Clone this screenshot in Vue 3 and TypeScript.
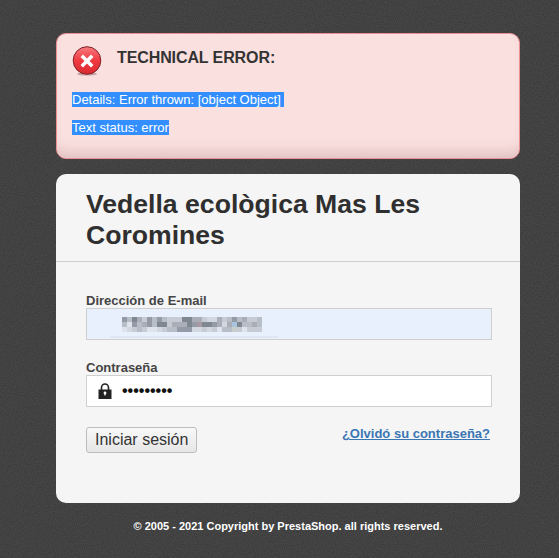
<script setup lang="ts">
const palette = ['#7f8791', '#959ba6', '#a9aeb8', '#b8bec8', '#c6cbd4', '#d3d7e0', '#dfe3ec', '#a89aa4', '#a9c4dc', '#c9cfc8']

// blurred-out e-mail value, one digit per mosaic cell
const rows = [
  '1302413134440022455243132443',
  '3613213004222017001252803323',
  '6543466543311155454633946444',
]
const mosaic = rows.join('').split('').map((digit) => palette[Number(digit)])

const noise =
  "url(\"data:image/svg+xml,%3Csvg xmlns='http://www.w3.org/2000/svg' width='200' height='200'%3E%3Cfilter id='n'%3E%3CfeTurbulence type='fractalNoise' baseFrequency='.9' numOctaves='2'/%3E%3CfeColorMatrix values='0 0 0 0 1 0 0 0 0 1 0 0 0 0 1 .12 0 0 0 0'/%3E%3C/filter%3E%3Crect width='200' height='200' filter='url(%23n)'/%3E%3C/svg%3E\")"
</script>

<template>
  <div class="page" :style="{ backgroundImage: noise }">
    <div class="content">
      <div class="alert">
        <div class="alert-head">
          <svg class="error-icon" width="30" height="30" viewBox="0 0 30 30">
            <defs>
              <linearGradient id="redBall" x1="0" y1="0" x2="0" y2="1">
                <stop offset="0" stop-color="#f77b80" />
                <stop offset="0.5" stop-color="#ef3a40" />
                <stop offset="1" stop-color="#d92a30" />
              </linearGradient>
            </defs>
            <ellipse cx="15" cy="28" rx="10" ry="1.6" fill="#9c7a7a" opacity="0.6" />
            <circle cx="15" cy="14.5" r="13.8" fill="url(#redBall)" stroke="#7d2226" stroke-width="1" />
            <path d="M11 8.500l4 4 4-4 2.500 2.500-4 4 4 4-2.500 2.500-4-4-4 4L8.500 19l4-4-4-4z" fill="#fff" />
          </svg>
          <h3 class="alert-title">TECHNICAL ERROR:</h3>
        </div>
        <p class="alert-line"><span class="selected">Details: Error thrown: [object Object]&nbsp;</span></p>
        <p class="alert-line"><span class="selected">Text status: error</span></p>
      </div>

      <div class="card">
        <h1 class="shop-name">Vedella ecològica Mas Les Coromines</h1>
        <form class="login" @submit.prevent>
          <label class="field-label">Dirección de E-mail</label>
          <div class="field field-email">
            <div class="mosaic">
              <i v-for="(color, index) in mosaic" :key="index" :style="{ background: color }"></i>
            </div>
            <div class="autofill-line"></div>
          </div>

          <label class="field-label second">Contraseña</label>
          <div class="field">
            <svg class="lock" width="14" height="16" viewBox="0 0 14 16">
              <path d="M3.500 7V4.500a3.500 3.500 0 0 1 7 0V7" fill="none" stroke="#222" stroke-width="1.600" />
              <path d="M0.500 6.500h13V16H0.500z" fill="#222" />
              <circle cx="7" cy="10" r="1.400" fill="#fff" />
              <path d="M6.400 10h1.200v2.600H6.400z" fill="#fff" />
            </svg>
            <span class="dots">•••••••••</span>
          </div>

          <div class="actions">
            <button class="submit" type="submit">Iniciar sesión</button>
            <a class="forgot" href="#">¿Olvidó su contraseña?</a>
          </div>
        </form>
      </div>

      <p class="copyright">© 2005 - 2021 Copyright by PrestaShop. all rights reserved.</p>
    </div>
  </div>
</template>

<style>
body {
  background-color: #363636;
}
</style>

<style scoped>
.page {
  height: 558px;
  overflow: hidden;
  font-family: 'Liberation Sans', Arial, sans-serif;
  color: #333;
}

.content {
  width: 464px;
  margin-left: 56px;
  padding-top: 33px;
}

.alert {
  height: 126px;
  box-sizing: border-box;
  padding: 12px 15px;
  background: #fbe0e0;
  border: 1px solid #ec8f93;
  border-radius: 10px;
  box-shadow: inset 0 -14px 14px -8px rgba(120, 70, 70, 0.2);
}

.alert-head {
  display: flex;
  align-items: flex-start;
  gap: 15px;
  height: 46px;
}

.error-icon {
  flex: none;
}

.alert-title {
  margin: 3px 0 0;
  font-size: 16px;
  font-weight: bold;
  line-height: 18px;
  letter-spacing: -0.1px;
}

.alert-line {
  margin: 0 0 13px;
  font-size: 13px;
  line-height: 15px;
}

.selected {
  background: #338fff;
  color: #fff;
}

.card {
  height: 329px;
  box-sizing: border-box;
  margin-top: 15px;
  background: #f5f5f5;
  border-radius: 10px;
}

.shop-name {
  margin: 0;
  padding: 15px 30px 10px;
  font-size: 26.6px;
  font-weight: bold;
  line-height: 31px;
  color: #2f2f2f;
  border-bottom: 1px solid #cfcfcf;
}

.login {
  padding: 32px 28px 0 30px;
}

.field-label {
  display: block;
  font-size: 13px;
  font-weight: bold;
  line-height: 14px;
  color: #444;
}

.field-label.second {
  margin-top: 21px;
}

.field {
  position: relative;
  display: flex;
  align-items: center;
  height: 32px;
  box-sizing: border-box;
  background: #fff;
  border: 1px solid #cfcfcf;
}

.field-email {
  background: #e8f0fd;
}

.mosaic {
  display: grid;
  grid-template-columns: repeat(28, 5px);
  grid-auto-rows: 5px;
  margin-left: 35px;
}

.mosaic i {
  display: block;
}

.autofill-line {
  position: absolute;
  left: 23px;
  bottom: 1px;
  width: 168px;
  height: 2px;
  background: #e0e7f3;
}

.lock {
  flex: none;
  margin-left: 11px;
}

.dots {
  margin-left: 10px;
  font-size: 16px;
  font-weight: bold;
  color: #111;
}

.actions {
  display: flex;
  justify-content: space-between;
  align-items: flex-start;
  margin-top: 20px;
}

.submit {
  height: 26px;
  padding: 0 8px;
  font-family: inherit;
  font-size: 16px;
  color: #333;
  background: linear-gradient(#f8f8f8, #e6e6e6);
  border: 1px solid #bdbdbd;
  border-radius: 3px;
}

.forgot {
  margin: -1px 2px 0 0;
  font-size: 13px;
  font-weight: bold;
  line-height: 16px;
  color: #3a76b4;
}

.copyright {
  margin: 16px 0 0;
  font-size: 11px;
  font-weight: bold;
  line-height: 14px;
  text-align: center;
  color: #fff;
}
</style>
